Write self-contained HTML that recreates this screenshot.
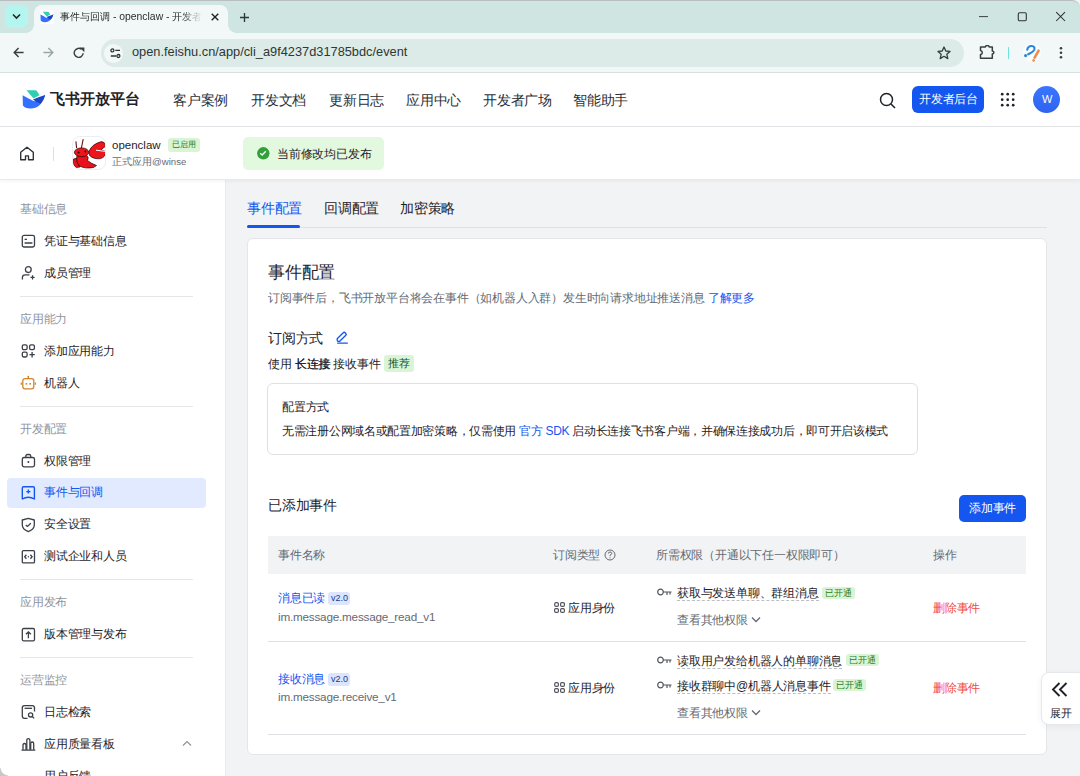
<!DOCTYPE html>
<html><head><meta charset="utf-8">
<style>
*{box-sizing:border-box;margin:0;padding:0}
html,body{width:1080px;height:776px;overflow:hidden;background:#f2f3f5;font-family:"Liberation Sans",sans-serif;color:#1f2329;letter-spacing:-0.2px}
.a{position:absolute}
.t{position:absolute;white-space:nowrap;line-height:1}
svg{display:block}
/* chrome */
#tabstrip{left:0;top:0;width:1080px;height:33px;background:#cfe5e1;border-top:1px solid #b9bfc0;border-top-right-radius:8px}
#toolbar{left:0;top:33px;width:1080px;height:40px;background:#f2f8f7;border-bottom:1px solid #d6e2df}
/* header */
#hdr{left:0;top:73px;width:1080px;height:54px;background:#fff;border-bottom:1px solid #e4e6e9}
#bar2{left:0;top:127px;width:1080px;height:53px;background:#fff;border-bottom:1px solid #e8e9ec;box-shadow:0 1px 4px rgba(31,35,41,.06);z-index:2}
#side{left:0;top:180px;width:226px;height:596px;background:#fff;border-right:1px solid #e9ebee}
.nav{font-size:14px;color:#2b2f36;top:93px}
.sec{font-size:12px;color:#8f959e;left:20px}
.it{font-size:12px;color:#1f2329;left:44px}
.ic{position:absolute;left:21px}
.dv{position:absolute;left:20px;width:173px;height:1px;background:#e4e6e9}
.tag{position:absolute;border-radius:3px;font-size:10px;line-height:1}
.g{background:#d9f5d6;color:#2b7d24}
</style></head><body>
<!-- ========== BROWSER CHROME ========== -->
<div id="tabstrip" class="a"></div>
<div class="a" style="left:5px;top:5px;width:23px;height:23px;border-radius:7px;background:#b5f5ef"></div>
<svg class="a" style="left:11px;top:12px" width="11" height="9" viewBox="0 0 11 9"><path d="M2 2.5 L5.5 6 L9 2.5" fill="none" stroke="#1f2a28" stroke-width="1.6"/></svg>
<div class="a" style="left:34px;top:5px;width:194px;height:28px;background:#f2f8f7;border-radius:8px 8px 0 0"></div>
<div class="a" style="left:26px;top:25px;width:8px;height:8px;background:radial-gradient(circle at 0 0,transparent 7.5px,#f2f8f7 8px)"></div><div class="a" style="left:228px;top:25px;width:8px;height:8px;background:radial-gradient(circle at 100% 0,transparent 7.5px,#f2f8f7 8px)"></div>
<div class="a" style="left:40px;top:10px;width:14px;height:14px;background:#fff;border-radius:2px"></div><svg class="a" style="left:40px;top:11px" width="14" height="12" viewBox="0 0 24 21"><path d="M4.5 1.3 H13.2 Q14.4 1.3 15.2 2.4 L17.5 6.2 L11.5 9.5 Z" fill="#2fcfb3"/><path d="M0.6 6.3 Q6 9.3 10.5 11.6 Q13 12.8 15.5 11.4 L23.2 6 Q21.5 12.5 17.5 16.3 Q13.5 19.8 8 19.6 Q3 19.3 0.9 16.5 Z" fill="#3370ff"/><path d="M11 10.6 Q17 7.8 23.2 6 Q21.6 11.5 18.5 14.8 Q14.5 13.8 11 10.6 Z" fill="#1f44c4"/></svg>
<div class="t" style="left:60px;top:11.5px;width:142px;overflow:hidden;font-size:10.4px;color:#2a2f2e;letter-spacing:0;-webkit-mask-image:linear-gradient(90deg,#000 85%,transparent)">事件与回调 - openclaw - 开发者后台</div>
<svg class="a" style="left:211px;top:13px" width="8" height="8" viewBox="0 0 8 8"><path d="M0.7 0.7 L7.3 7.3 M7.3 0.7 L0.7 7.3" stroke="#1f2322" stroke-width="1.35"/></svg>
<svg class="a" style="left:240px;top:12.5px" width="9" height="9" viewBox="0 0 9 9"><path d="M4.5 0 V9 M0 4.5 H9" stroke="#2a3a37" stroke-width="1.35"/></svg>
<!-- window controls -->
<svg class="a" style="left:979px;top:16px" width="10" height="2"><rect width="9" height="1.1" fill="#4a5250"/></svg>
<svg class="a" style="left:1017px;top:12px" width="10" height="10" viewBox="0 0 10 10"><rect x="1.3" y="0.8" width="8" height="8" rx="1.2" fill="none" stroke="#2f3634" stroke-width="1.1"/></svg>
<svg class="a" style="left:1055px;top:11px" width="11" height="12" viewBox="0 0 11 12"><path d="M1.2 1.2 L10 10 M10 1.2 L1.2 10" stroke="#2a2f2e" stroke-width="1.05"/></svg>

<div id="toolbar" class="a"></div>
<svg class="a" style="left:13px;top:47px" width="11" height="11" viewBox="0 0 11 11"><path d="M10.6 5.5 H1.2 M5.6 1.1 L1.2 5.5 L5.6 9.9" fill="none" stroke="#37403f" stroke-width="1.45"/></svg>
<svg class="a" style="left:43px;top:47px" width="11" height="11" viewBox="0 0 11 11"><path d="M0.4 5.5 H9.8 M5.4 1.1 L9.8 5.5 L5.4 9.9" fill="none" stroke="#9aa6a4" stroke-width="1.45"/></svg>
<svg class="a" style="left:73px;top:47px" width="12" height="12" viewBox="0 0 12 12"><path d="M10.2 6.3 A4.5 4.5 0 1 1 8.6 2.4" fill="none" stroke="#37403f" stroke-width="1.45"/><path d="M6.8 0.6 L11.4 0.6 L11.4 5.2 Z" fill="#37403f"/></svg>
<div class="a" style="left:101px;top:39px;width:863px;height:28px;border-radius:14px;background:#dcebe8"></div>
<div class="a" style="left:104px;top:44px;width:19px;height:19px;border-radius:10px;background:#f2f8f7"></div>
<svg class="a" style="left:109.5px;top:48px" width="11" height="11" viewBox="0 0 11 11"><circle cx="2.4" cy="2.4" r="1.5" fill="none" stroke="#2c3533" stroke-width="1.3"/><path d="M5.3 2.4 H10 M0.8 8 H6" stroke="#2c3533" stroke-width="1.3"/><circle cx="8.4" cy="8" r="1.5" fill="none" stroke="#2c3533" stroke-width="1.3"/></svg>
<div class="t" style="left:132px;top:46px;font-size:12.8px;color:#2f3634;letter-spacing:0">open.feishu.cn/app/cli_a9f4237d31785bdc/event</div>
<svg class="a" style="left:937px;top:46px" width="14" height="14" viewBox="0 0 14 14"><path d="M7 1 L8.8 5 L13 5.4 L9.8 8.2 L10.8 12.6 L7 10.3 L3.2 12.6 L4.2 8.2 L1 5.4 L5.2 5 Z" fill="none" stroke="#333d3b" stroke-width="1.3" stroke-linejoin="round"/></svg>
<svg class="a" style="left:979px;top:45px" width="16" height="15" viewBox="0 0 16 15"><path d="M1.5 1.9 H6.4 Q6.6 0.5 8.3 0.5 Q10 0.5 10.2 1.9 H13.3 V5.9 Q14.9 6.1 14.9 7.5 Q14.9 8.9 13.3 9.1 V13.3 H1.5 V9.6 Q3.3 9.3 3.3 7.5 Q3.3 5.7 1.5 5.4 Z" fill="none" stroke="#37403f" stroke-width="1.5" stroke-linejoin="round"/></svg>
<div class="a" style="left:1008px;top:47px;width:1px;height:12px;background:#6fe3de"></div>
<svg class="a" style="left:1022px;top:43px" width="20" height="20" viewBox="0 0 20 20"><circle cx="10" cy="10" r="9" fill="#fbfdfd"/><path d="M5.2 6.8 Q6 2.8 9.8 3 Q13.3 3.4 12.3 6.6 Q11.4 8.8 8.2 10.2 L6.2 11.2" fill="none" stroke="#2a88d6" stroke-width="2.1" stroke-linecap="round"/><circle cx="3.6" cy="12.6" r="1.6" fill="#2a88d6"/><path d="M16.6 7.6 L12.6 14.6" stroke="#ee8a52" stroke-width="2.6" stroke-linecap="round"/><circle cx="11.6" cy="17.4" r="1.3" fill="#ee8a52"/></svg>
<svg class="a" style="left:1059px;top:46px" width="4" height="14" viewBox="0 0 4 14"><circle cx="2" cy="2.2" r="1.3" fill="#37403f"/><circle cx="2" cy="6.8" r="1.3" fill="#37403f"/><circle cx="2" cy="11.3" r="1.3" fill="#37403f"/></svg>

<!-- ========== SITE HEADER ========== -->
<div id="hdr" class="a"></div>
<svg class="a" style="left:22px;top:89px" width="24" height="21" viewBox="0 0 24 21"><path d="M4.5 1.3 H13.2 Q14.4 1.3 15.2 2.4 L17.5 6.2 L11.5 9.5 Z" fill="#2fcfb3"/><path d="M0.6 6.3 Q6 9.3 10.5 11.6 Q13 12.8 15.5 11.4 L23.2 6 Q21.5 12.5 17.5 16.3 Q13.5 19.8 8 19.6 Q3 19.3 0.9 16.5 Z" fill="#3370ff"/><path d="M11 10.6 Q17 7.8 23.2 6 Q21.6 11.5 18.5 14.8 Q14.5 13.8 11 10.6 Z" fill="#1f44c4"/></svg>
<div class="t" style="left:50px;top:92px;font-size:14.8px;font-weight:bold;color:#1f2329;letter-spacing:0">飞书开放平台</div>
<div class="t nav" style="left:173px">客户案例</div>
<div class="t nav" style="left:251px">开发文档</div>
<div class="t nav" style="left:329px">更新日志</div>
<div class="t nav" style="left:406px">应用中心</div>
<div class="t nav" style="left:483px">开发者广场</div>
<div class="t nav" style="left:573px">智能助手</div>
<svg class="a" style="left:879px;top:92px" width="18" height="17" viewBox="0 0 18 17"><circle cx="7.5" cy="7.5" r="6" fill="none" stroke="#1f2329" stroke-width="1.5"/><path d="M12 12 L16 16" stroke="#1f2329" stroke-width="1.6"/></svg>
<div class="a" style="left:912px;top:86px;width:72px;height:27px;border-radius:6px;background:#1456f0"></div>
<div class="t" style="left:919px;top:93px;font-size:12px;color:#fff">开发者后台</div>
<svg class="a" style="left:1000px;top:92px" width="16" height="16" viewBox="0 0 16 16"><g fill="#1f2329"><circle cx="2.2" cy="2.2" r="1.35"/><circle cx="7.7" cy="2.2" r="1.35"/><circle cx="13.2" cy="2.2" r="1.35"/><circle cx="2.2" cy="7.7" r="1.35"/><circle cx="7.7" cy="7.7" r="1.35"/><circle cx="13.2" cy="7.7" r="1.35"/><circle cx="2.2" cy="13.2" r="1.35"/><circle cx="7.7" cy="13.2" r="1.35"/><circle cx="13.2" cy="13.2" r="1.35"/></g></svg>
<div class="a" style="left:1033px;top:86px;width:27px;height:27px;border-radius:50%;background:linear-gradient(180deg,#3b76ff,#2d63ef)"></div>
<div class="t" style="left:1042px;top:94px;font-size:11px;color:#fff">W</div>

<!-- ========== APP BAR ========== -->
<div id="bar2" class="a"></div>
<svg class="a" style="left:19px;top:146px;z-index:3" width="16" height="16" viewBox="0 0 16 16"><path d="M1.7 6.3 L8 1.2 L14.3 6.3 V13.7 H9.5 V9.8 H6.5 V13.7 H1.7 Z" fill="none" stroke="#2b2f36" stroke-width="1.35" stroke-linejoin="round"/></svg>
<div class="a" style="left:53px;top:147px;width:1px;height:14px;background:#dee0e3;z-index:3"></div>
<div class="a" style="left:72px;top:136px;width:34px;height:34px;border-radius:8px;background:#fff;border:1px solid #eceef0;z-index:3;overflow:hidden">
<svg width="34" height="34" viewBox="0 0 34 34" style="position:absolute;left:-1px;top:-1px"><g stroke="#2a0505" stroke-width="0.7" stroke-linejoin="round">
<path d="M4.6 12 L3.9 5.4 M9.3 12.4 L11.2 3.2" stroke="#6a1010" stroke-width="1.1" fill="none"/>
<path d="M1.5 23 Q0.3 29 4 31.5 L8 31 Q5 27 5.5 22 Z" fill="#e8121a"/>
<path d="M5 19.5 Q3.5 26 7.5 30 Q13 33 21.5 31.5 L24.5 29.5 Q19 27.5 15.5 24.5 Q17.5 21 14 19 Z" fill="#e8121a"/>
<ellipse cx="9.6" cy="16.3" rx="7.2" ry="4.4" fill="#ee141c"/>
<path d="M17.2 15 Q20 8 29.5 5.6 Q33.5 6 33.8 10 L29 13.8 L33.8 15.5 Q34 21 28.5 22.6 Q21.5 23.5 17.6 19.5 Z" fill="#ee141c"/>
</g>
<path d="M24 14.2 L33 15.3" stroke="#fff" stroke-width="1"/>
<circle cx="6.6" cy="16.6" r="1" fill="#200"/><circle cx="13.4" cy="15.5" r="1" fill="#200"/>
</svg>
</div>
<div class="t" style="left:112px;top:140px;font-size:11.5px;color:#1f2329;z-index:3;letter-spacing:0">openclaw</div>
<div class="tag g" style="left:168px;top:138px;width:32px;height:13.5px;z-index:3;font-size:8px;padding:3px 0 0 4px;color:#237a1c;letter-spacing:0">已启用</div>
<div class="t" style="left:112px;top:157px;font-size:10.3px;color:#646a73;z-index:3;letter-spacing:0">正式应用<span style="font-size:9.6px">@winse</span></div>
<div class="a" style="left:243px;top:137px;width:141px;height:33px;border-radius:5px;background:#e3f9df;z-index:3"></div>
<svg class="a" style="left:257px;top:147px;z-index:3" width="13" height="13" viewBox="0 0 13 13"><circle cx="6.3" cy="6.3" r="6.2" fill="#32a03a"/><path d="M3.2 6.2 L5.2 8 L8.8 4.3" fill="none" stroke="#fff" stroke-width="1.4"/></svg>
<div class="t" style="left:277px;top:148px;font-size:12px;color:#1f2329;z-index:3">当前修改均已发布</div>

<!-- ========== SIDEBAR ========== -->
<div id="side" class="a"></div>
<div class="t sec" style="top:203px">基础信息</div>
<div class="t it" style="top:235px">凭证与基础信息</div>
<div class="t it" style="top:267px">成员管理</div>
<div class="dv" style="top:296px"></div>
<div class="t sec" style="top:313px">应用能力</div>
<div class="t it" style="top:345px">添加应用能力</div>
<div class="t it" style="top:377px">机器人</div>
<div class="dv" style="top:406px"></div>
<div class="t sec" style="top:423px">开发配置</div>
<div class="t it" style="top:455px">权限管理</div>
<div class="a" style="left:7px;top:478px;width:199px;height:30px;border-radius:4px;background:#e1eaff"></div>
<div class="t it" style="top:486px;color:#1456f0">事件与回调</div>
<div class="t it" style="top:518px">安全设置</div>
<div class="t it" style="top:550px">测试企业和人员</div>
<div class="dv" style="top:579px"></div>
<div class="t sec" style="top:596px">应用发布</div>
<div class="t it" style="top:628px">版本管理与发布</div>
<div class="dv" style="top:657px"></div>
<div class="t sec" style="top:674px">运营监控</div>
<div class="t it" style="top:706px">日志检索</div>
<div class="t it" style="top:738px">应用质量看板</div>
<div class="t it" style="top:770px">用户反馈</div>
<div class="a" style="left:0;top:768px;width:8px;height:8px;background:radial-gradient(circle at 100% 0,transparent 6.5px,#c4c8c9 8px)"></div>


<svg class="a" style="left:20px;top:233px" width="16" height="16" viewBox="0 0 16 16"><g fill="none" stroke="#3b3f46" stroke-width="1.3"><rect x="2.3" y="2.4" width="12.2" height="11.6" rx="1.8"/><path d="M4.6 6.4 H7 M4.6 10 H12.4"/></g></svg>
<svg class="a" style="left:20px;top:265px" width="16" height="16" viewBox="0 0 16 16"><g fill="none" stroke="#3b3f46" stroke-width="1.3"><circle cx="8.3" cy="4.6" r="2.9"/><path d="M2.4 14.5 V12.5 Q2.4 9.8 5.2 9.8 H9.5"/><path d="M10.5 12.4 H14.6 M12.55 10.3 V14.5"/></g></svg>
<svg class="a" style="left:20px;top:343px" width="16" height="16" viewBox="0 0 16 16"><g fill="none" stroke="#3b3f46" stroke-width="1.3"><rect x="2.3" y="1.9" width="4.8" height="4.8" rx="1.4"/><rect x="9.6" y="1.9" width="4.8" height="4.8" rx="1.4"/><rect x="2.3" y="9.2" width="4.8" height="4.8" rx="1.4"/><path d="M9.5 11.6 H14.8 M12.1 9 V14.4"/></g></svg>
<svg class="a" style="left:20px;top:375px" width="16" height="16" viewBox="0 0 16 16"><g fill="none" stroke="#d4852b" stroke-width="1.3"><rect x="2.8" y="3.6" width="11" height="10.2" rx="2.2"/><path d="M8.3 3.6 V1.8"/><path d="M1.3 7.6 V9.8 M15.3 7.6 V9.8"/></g><circle cx="8.3" cy="1.6" r="0.9" fill="#d4852b"/><rect x="5.6" y="8" width="1.6" height="1.6" fill="#d4852b"/><rect x="9.4" y="8" width="1.6" height="1.6" fill="#d4852b"/></svg>
<svg class="a" style="left:20px;top:453px" width="16" height="16" viewBox="0 0 16 16"><g fill="none" stroke="#3b3f46" stroke-width="1.3"><rect x="2.3" y="4.5" width="12.2" height="9.3" rx="1.8"/><path d="M5.8 4.5 V3.3 Q5.8 1.5 7.6 1.5 H9 Q10.8 1.5 10.8 3.3 V4.5"/></g><circle cx="8.4" cy="9" r="1" fill="#3b3f46"/></svg>
<svg class="a" style="left:20px;top:485px" width="16" height="16" viewBox="0 0 16 16"><g fill="none" stroke="#1456f0" stroke-width="1.4" stroke-linejoin="round"><path d="M2.3 3 Q2.3 1.8 3.5 1.8 H13.2 Q14.4 1.8 14.4 3 V14 Q11.5 12.2 8.35 12.2 Q5.2 12.2 2.3 14 Z"/><path d="M6.3 6.6 H10.4 M8.35 4.6 V8.6"/></g></svg>
<svg class="a" style="left:20px;top:517px" width="16" height="16" viewBox="0 0 16 16"><g fill="none" stroke="#3b3f46" stroke-width="1.3" stroke-linejoin="round"><path d="M8.3 1.3 L14.3 3 V8 Q14.3 12.4 8.3 14.6 Q2.3 12.4 2.3 8 V3 Z"/><path d="M5.8 7.9 L7.6 9.4 L10.8 6.3"/></g></svg>
<svg class="a" style="left:20px;top:549px" width="16" height="16" viewBox="0 0 16 16"><g fill="none" stroke="#3b3f46" stroke-width="1.3"><rect x="2.3" y="1.6" width="12.2" height="12.3" rx="1.2"/><path d="M6.4 5.8 L4.7 7.75 L6.4 9.7 M10.4 5.8 L12.1 7.75 L10.4 9.7"/></g><circle cx="8.4" cy="7.75" r="0.7" fill="#3b3f46"/></svg>
<svg class="a" style="left:20px;top:627px" width="16" height="16" viewBox="0 0 16 16"><g fill="none" stroke="#3b3f46" stroke-width="1.3"><rect x="2.3" y="1.5" width="12.2" height="12.3" rx="1.4"/><path d="M8.4 11.2 V4.8 M5.9 7.3 L8.4 4.8 L10.9 7.3"/></g></svg>
<svg class="a" style="left:20px;top:704px" width="16" height="16" viewBox="0 0 16 16"><g fill="none" stroke="#3b3f46" stroke-width="1.3"><path d="M14.5 7.5 V3.8 Q14.5 1.6 12.3 1.6 H4.5 Q2.3 1.6 2.3 3.8 V12 Q2.3 14.4 4.5 14.4 H7.5"/><path d="M4.6 4.3 H12.1"/><circle cx="10.6" cy="10.9" r="2.1"/><path d="M12.2 12.5 L14.2 14.4"/></g></svg>
<svg class="a" style="left:20px;top:736px" width="16" height="16" viewBox="0 0 16 16"><g fill="none" stroke="#3b3f46" stroke-width="1.3"><path d="M3 13.8 V9 Q3 7.5 4.5 7.5 Q6 7.5 6 9 V13.8"/><path d="M6.8 13.8 V4.2 Q6.8 2.6 8.35 2.6 Q9.9 2.6 9.9 4.2 V13.8"/><path d="M10.7 13.8 V7.4 Q10.7 6 12.2 6 Q13.7 6 13.7 7.4 V13.8"/><path d="M1.5 14.1 H15.3"/></g></svg>
<svg class="a" style="left:182px;top:740px" width="10" height="7" viewBox="0 0 10 7"><path d="M1 5.5 L5 1.5 L9 5.5" fill="none" stroke="#8f959e" stroke-width="1.2"/></svg>

<!-- ========== MAIN ========== -->
<div class="t" style="left:247px;top:201px;font-size:14px;color:#1456f0">事件配置</div>
<div class="t" style="left:324px;top:201px;font-size:14px;color:#1f2329">回调配置</div>
<div class="t" style="left:400px;top:201px;font-size:14px;color:#1f2329">加密策略</div>
<div class="a" style="left:247px;top:227px;width:800px;height:1px;background:#dee0e3"></div>
<div class="a" style="left:247px;top:225px;width:53px;height:3px;border-radius:2px;background:#1456f0"></div>

<div class="a" style="left:247px;top:238px;width:800px;height:517px;border-radius:6px;background:#fff;border:1px solid #e4e6e9"></div>
<div class="t" style="left:268px;top:264px;font-size:16.5px;color:#1f2329">事件配置</div>
<div class="t" style="left:268px;top:292px;font-size:12px;color:#646a73">订阅事件后，飞书开放平台将会在事件（如机器人入群）发生时向请求地址推送消息 <span style="color:#1456f0">了解更多</span></div>
<div class="t" style="left:268px;top:331px;font-size:14px;color:#1f2329">订阅方式</div>
<svg class="a" style="left:334px;top:330px" width="16" height="16" viewBox="0 0 16 16"><path d="M3.2 10.3 V8.8 L9.3 2.7 Q10.2 1.8 11.1 2.7 L11.8 3.4 Q12.7 4.3 11.8 5.2 L5.7 11.3 H4.2 Q3.2 11.3 3.2 10.3 Z" fill="none" stroke="#1456f0" stroke-width="1.35" stroke-linejoin="round"/><path d="M3.7 13.1 H13.4" stroke="#1456f0" stroke-width="1.35" stroke-linecap="round"/></svg>
<div class="t" style="left:268px;top:358px;font-size:12px;color:#1f2329">使用 <span style="text-shadow:0.35px 0 0 #1f2329">长连接</span> 接收事件</div>
<div class="tag g" style="left:384px;top:355px;width:30px;height:17px;font-size:10.5px;padding:3px 0 0 4px;color:#1a5224">推荐</div>

<div class="a" style="left:267px;top:383px;width:651px;height:72px;border-radius:6px;border:1px solid #dee0e3"></div>
<div class="t" style="left:282px;top:401px;font-size:12px;color:#1f2329">配置方式</div>
<div class="t" style="left:282px;top:425px;font-size:12px;color:#1f2329;letter-spacing:-0.3px">无需注册公网域名或配置加密策略，仅需使用 <span style="color:#1456f0">官方 SDK</span> 启动长连接飞书客户端，并确保连接成功后，即可开启该模式</div>

<div class="t" style="left:268px;top:498px;font-size:14px;color:#1f2329">已添加事件</div>
<div class="a" style="left:959px;top:495px;width:67px;height:27px;border-radius:5px;background:#1456f0"></div>
<div class="t" style="left:969px;top:502px;font-size:12px;color:#fff">添加事件</div>

<!-- table -->
<div class="a" style="left:268px;top:536px;width:758px;height:38px;background:#f2f3f5"></div>
<div class="t" style="left:278px;top:549px;font-size:12px;color:#646a73">事件名称</div>
<div class="t" style="left:553px;top:549px;font-size:12px;color:#646a73">订阅类型</div>
<svg class="a" style="left:604px;top:549px" width="12" height="12" viewBox="0 0 12 12"><circle cx="6" cy="6" r="5" fill="none" stroke="#646a73" stroke-width="1"/><path d="M4.3 4.6 Q4.3 3 6 3 Q7.7 3 7.7 4.5 Q7.7 5.5 6 6.2 V7.2" fill="none" stroke="#646a73" stroke-width="1"/><circle cx="6" cy="8.8" r=".6" fill="#646a73"/></svg>
<div class="t" style="left:656px;top:549px;font-size:12px;color:#646a73">所需权限（开通以下任一权限即可）</div>
<div class="t" style="left:933px;top:549px;font-size:12px;color:#646a73">操作</div>

<!-- row 1 -->
<div class="t" style="left:278px;top:592px;font-size:12px;color:#1456f0">消息已读</div>
<div class="tag" style="left:328px;top:592px;width:22px;height:13px;background:#dbe5fd;color:#1b3a8c;font-size:9px;padding:2px 0 0 3px;letter-spacing:0">v2.0</div>
<div class="t" style="left:278px;top:610.5px;font-size:11.7px;color:#646a73">im.message.message_read_v1</div>
<svg class="a" style="left:554px;top:602px" width="11" height="11" viewBox="0 0 11 11"><g fill="none" stroke="#51565d" stroke-width="1.2"><rect x="0.7" y="0.7" width="3.7" height="3.7" rx="1.3"/><rect x="6.6" y="0.6" width="3.8" height="3.8" rx="1.2"/><rect x="0.6" y="6.6" width="3.8" height="3.8" rx="1.2"/><rect x="6.6" y="6.6" width="3.8" height="3.8" rx="1.2"/></g></svg>
<div class="t" style="left:568px;top:602px;font-size:12px;color:#1f2329">应用身份</div>
<svg class="a" style="left:657px;top:588px" width="15" height="9" viewBox="0 0 15 9"><circle cx="3.5" cy="4" r="2.8" fill="none" stroke="#51565d" stroke-width="1.2"/><path d="M6.3 4 H14.5 M10 4 V7 M13 4 V6.5" stroke="#51565d" stroke-width="1.2"/></svg>
<div class="t" style="left:677px;top:587px;font-size:12px;color:#1f2329;border-bottom:1px dashed #bbbfc4;padding-bottom:1px">获取与发送单聊、群组消息</div>
<div class="tag g" style="left:822px;top:587px;width:33px;height:12px;font-size:9px;padding:1.5px 0 0 3px">已开通</div>
<div class="t" style="left:677px;top:614px;font-size:12px;color:#646a73">查看其他权限</div>
<svg class="a" style="left:751px;top:616px" width="10" height="7" viewBox="0 0 10 7"><path d="M1 1.5 L5 5.5 L9 1.5" fill="none" stroke="#646a73" stroke-width="1.3"/></svg>
<div class="t" style="left:933px;top:602px;font-size:12px;color:#f54a45">删除事件</div>
<div class="a" style="left:268px;top:641px;width:758px;height:1px;background:#dee0e3"></div>

<!-- row 2 -->
<div class="t" style="left:278px;top:673px;font-size:12px;color:#1456f0">接收消息</div>
<div class="tag" style="left:328px;top:673px;width:22px;height:13px;background:#dbe5fd;color:#1b3a8c;font-size:9px;padding:2px 0 0 3px;letter-spacing:0">v2.0</div>
<div class="t" style="left:278px;top:690.5px;font-size:11.7px;color:#646a73">im.message.receive_v1</div>
<svg class="a" style="left:554px;top:682px" width="11" height="11" viewBox="0 0 11 11"><g fill="none" stroke="#51565d" stroke-width="1.2"><rect x="0.7" y="0.7" width="3.7" height="3.7" rx="1.3"/><rect x="6.6" y="0.6" width="3.8" height="3.8" rx="1.2"/><rect x="0.6" y="6.6" width="3.8" height="3.8" rx="1.2"/><rect x="6.6" y="6.6" width="3.8" height="3.8" rx="1.2"/></g></svg>
<div class="t" style="left:568px;top:682px;font-size:12px;color:#1f2329">应用身份</div>
<svg class="a" style="left:657px;top:656px" width="15" height="9" viewBox="0 0 15 9"><circle cx="3.5" cy="4" r="2.8" fill="none" stroke="#51565d" stroke-width="1.2"/><path d="M6.3 4 H14.5 M10 4 V7 M13 4 V6.5" stroke="#51565d" stroke-width="1.2"/></svg>
<div class="t" style="left:677px;top:655px;font-size:12px;color:#1f2329;border-bottom:1px dashed #bbbfc4;padding-bottom:1px">读取用户发给机器人的单聊消息</div>
<div class="tag g" style="left:846px;top:654px;width:33px;height:12px;font-size:9px;padding:1.5px 0 0 3px">已开通</div>
<svg class="a" style="left:657px;top:681px" width="15" height="9" viewBox="0 0 15 9"><circle cx="3.5" cy="4" r="2.8" fill="none" stroke="#51565d" stroke-width="1.2"/><path d="M6.3 4 H14.5 M10 4 V7 M13 4 V6.5" stroke="#51565d" stroke-width="1.2"/></svg>
<div class="t" style="left:677px;top:680px;font-size:12px;color:#1f2329;border-bottom:1px dashed #bbbfc4;padding-bottom:1px">接收群聊中@机器人消息事件</div>
<div class="tag g" style="left:833px;top:679px;width:33px;height:12px;font-size:9px;padding:1.5px 0 0 3px">已开通</div>
<div class="t" style="left:677px;top:707px;font-size:12px;color:#646a73">查看其他权限</div>
<svg class="a" style="left:751px;top:709px" width="10" height="7" viewBox="0 0 10 7"><path d="M1 1.5 L5 5.5 L9 1.5" fill="none" stroke="#646a73" stroke-width="1.3"/></svg>
<div class="t" style="left:933px;top:682px;font-size:12px;color:#f54a45">删除事件</div>
<div class="a" style="left:268px;top:734px;width:758px;height:1px;background:#dee0e3"></div>

<!-- expand float -->
<div class="a" style="left:1041px;top:672px;width:45px;height:53px;border-radius:8px;background:#fff;border:1px solid #e6e8eb;box-shadow:0 2px 6px rgba(31,35,41,.06)"></div>
<svg class="a" style="left:1051px;top:682px" width="18" height="16" viewBox="0 0 18 16"><path d="M8.5 1 L2 7.5 L8.5 14 M15.5 1 L9 7.5 L15.5 14" fill="none" stroke="#1f2329" stroke-width="1.9"/></svg>
<div class="t" style="left:1050px;top:707.5px;font-size:10.5px;color:#1f2329;letter-spacing:-0.3px">展开</div>
</body></html>
